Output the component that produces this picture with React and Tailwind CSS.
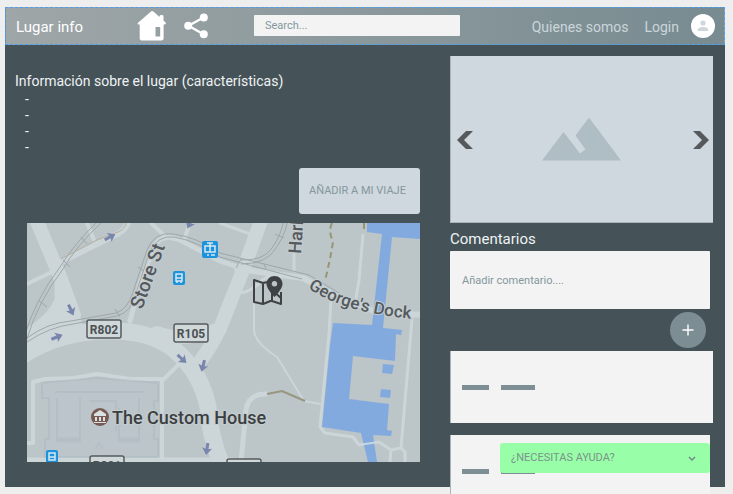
import React from "react";

function HomeIcon() {
  return (
    <svg viewBox="0 0 30 30" className="h-[30px] w-[30px]" aria-hidden="true">
      <path
        fill="#fff"
        fillRule="evenodd"
        d="M14 .6 Q15 -.4 16.4 .6 L22.5 6 V5 Q22.600 4 24.500 3.900 Q26.500 4 26.500 5 V9.500 L29 12 Q29.400 13.600 26.600 13.600 V27.500 Q26.500 29.300 24.500 29.500 H4.800 Q2.800 29.300 2.700 27.500 V13.600 Q0 13.600 .8 12 Z M18.500 16 V25.500 H23.200 V16 Z"
      />
    </svg>
  );
}

function ShareIcon() {
  return (
    <svg viewBox="0 0 24 26" className="h-[26px] w-6" aria-hidden="true">
      <path d="M19.500 4.500 L4.500 12.800 L19.500 21.200" fill="none" stroke="#fff" strokeWidth="2.400" />
      <g fill="#fff">
        <circle cx="19.800" cy="4.500" r="4" />
        <circle cx="4.200" cy="12.800" r="4" />
        <circle cx="19.800" cy="21.200" r="4" />
      </g>
    </svg>
  );
}

function Header() {
  return (
    <header className="flex h-[38px] items-center border border-dashed border-[#4a9ff0] bg-linear-to-r from-[#9fa6a8] to-[#778b90] pr-[9px] pb-px pl-[10px]">
      <h1 className="w-[121px] pt-[3px] text-[15px] text-white">Lugar info</h1>
      <a href="#inicio" aria-label="Inicio"><HomeIcon /></a>
      <a href="#compartir" aria-label="Compartir" className="ml-[17px]"><ShareIcon /></a>
      <input
        type="search"
        aria-label="Buscar"
        placeholder="Search..."
        className="ml-[46px] h-[21px] w-[206px] rounded-[1px] bg-[#f3f3f3] px-[11px] text-[11px] outline-none placeholder:text-[#84979d]"
      />
      <nav className="ml-auto flex items-center text-[14px] text-[#cbd6db]">
        <a href="#quienes" className="pt-[3px]">Quienes somos</a>
        <a href="#login" className="ml-4 pt-[3px]">Login</a>
        <a href="#perfil" aria-label="Perfil" className="ml-3 flex h-6 w-6 items-center justify-center rounded-full bg-white">
          <svg viewBox="0 0 12 12" className="h-3 w-3" fill="#cdd7dc" aria-hidden="true">
            <circle cx="6" cy="3" r="2.600" />
            <path d="M.8 11 V9.500 Q1 7.200 6 7 Q11 7.200 11.200 9.500 V11 Z" />
          </svg>
        </a>
      </nav>
    </header>
  );
}

const ARROWS = [
  [83, 14, -28],
  [44, 87, 65],
  [30, 114, -22],
  [155, 136, 42],
  [176, 143, 105],
  [180, 226, 98],
  [163, 0, 115],
];

const SHIELDS = [
  [60, 96, "R802"],
  [147, 100, "R105"],
  [63, 232, "R801"],
  [200, 235, "R801"],
];

function StreetMap() {
  return (
    <svg
      viewBox="0 0 393 239"
      preserveAspectRatio="xMidYMid slice"
      role="img"
      aria-label="Mapa"
      className="ml-3 block h-[239px] w-auto bg-[#bcc5c8]"
      fontFamily="Roboto, sans-serif"
    >
      {/* streets */}
      <g fill="none" stroke="#ccd5d8" strokeLinejoin="round" strokeLinecap="round">
        <path d="M9 -4 L32 51 L47 92" strokeWidth="14" />
        <path d="M28 52 V76 Q22 92 -4 108 L-2 122 L55 101 L48 80 Z" fill="#ccd5d8" strokeWidth="1" />
        <path d="M-4 132 Q35 107 85 108 Q125 108 149 128 Q174 150 181 184 Q183 215 196 245" strokeWidth="17" />
        <path d="M235 -5 L218 42 L199 90 Q190 116 174 137" strokeWidth="14" />
        <path d="M193 106 Q155 120 130 110" strokeWidth="14" />
        <path d="M34 39 L86 13 Q97 9 101 0" strokeWidth="6" />
        <path d="M0 61 L31 46 M60 0 L67 17 M124 0 L138 13 M163 0 L157 17" strokeWidth="4" />
        <path d="M103 98 L113 61 L128 22 Q136 9 155 18 L193 38 L214 45" strokeWidth="5" />
        <path d="M193 0 L226 12 M267 28 V48 M213 70 Q226 68 235 57 Q247 50 267 53" strokeWidth="3" />
        <path d="M210 46 L276 55 L315 76 L350 89 L397 92" strokeWidth="6" />
        <path d="M336 12 L332 57 L329 75 M304 77 L302 111 L293 204 L298 210 L326 214 L332 222 L352 219 L364 227 L374 225 L378 229 V240 M364 227 L363 239 M374 225 L385 96" strokeWidth="3" />
        <path d="M227 75 V108 Q229 121 250 134 L277 178 L293 181" strokeWidth="2" />
        <path d="M214 239 L219 187 Q221 171 239 171" strokeWidth="5" />
        <path d="M6 220 V159 L18 156 L47 155 L70 151 L103 156 H137 L157 136 M135 156 V239 M0 220 H6" strokeWidth="4" />
        <path d="M-2 239 H205" strokeWidth="9" />
      </g>
      {/* custom house block */}
      <g fill="none" stroke="#aab6c2" strokeWidth="2" opacity=".4">
        <path d="M15 160 L70 155 L131 160 V178 H127 V216 H131 V234 H18 V216 H22 V175 H15 Z" fill="#bdc8ce" />
        <path d="M30 175 V218 H53 V175 M92 185 V218 H112 V175 M62 178 H89 V208 M28 169 H118" />
        <path d="M30 217 H53 M92 217 H112" strokeWidth="5" />
        <path d="M68 226 L72 220 L76 226" />
      </g>
      {/* docks */}
      <path
        fill="#83aade"
        d="M340 0 H393 V16 L365 14 L356 105 L375 107 L374 112 L369 111 L368 138 L326 133 L322 176 L362 181 L360 207 L365 208 L364 213 L346 212 L350 239 H341 L334 210 L295 204 L303 122 L306 100 L345 102 L355 11 L340 9 Z M356 141 L367 142 L365 151 L355 150 Z M354 166 L364 167 L363 175 L353 174 Z"
      />
      <path d="M331 222 L352 219" stroke="#c7d5e2" strokeWidth="2" />
      {/* tram lines and footpaths */}
      <g fill="none" stroke="#9ea7aa" strokeWidth="1">
        <path d="M0 116 Q10 80 36 46 Q50 22 74 0 M-2 112 Q8 77 33 44 Q48 20 69 0" />
        <path d="M0 115 Q20 100 44 98 L89 90 Q101 86 106 69 L120 27 Q128 8 146 11 Q170 14 193 30 L225 38 L282 52 L312 70" />
        <path d="M0 119 Q22 104 46 101 L90 93 Q105 89 109 70 L123 28 Q131 12 147 14 Q170 18 193 34 L222 42 L275 56" />
        <path d="M213 37 Q237 38 245 25 Q254 12 256 0 M214 41 Q240 41 249 25 Q258 12 260 0" />
        <path d="M54 14 L60 21 M36 37 L43 44 M12 78 L20 84 M88 86 L93 94 M111 44 L117 48 M209 45 L214 36 M248 11 L257 15 M237 41 L239 46" />
      </g>
      <path d="M34 36 L70 17 L91 9 Q98 6 99 0" fill="none" stroke="#b5b09c" />
      <path d="M240 171 L255 168 L278 178" fill="none" stroke="#989680" strokeWidth="2" />
      <path d="M305 0 Q301 8 306 19 L303 36 L298 58 M337 0 V10" fill="none" stroke="#989573" strokeWidth="2" strokeDasharray="6 4" />
      {/* one-way arrows */}
      {ARROWS.map(([x, y, angle]) => (
        <path
          key={`${x}-${y}`}
          d="M-6 -1.500 H0 L-1 -5 L6 0 L-1 5 L0 1.500 H-6 Z"
          fill="#7885ad"
          transform={`translate(${x} ${y}) rotate(${angle})`}
        />
      ))}
      {/* transit stops */}
      <g fill="#1d93dc">
        <rect x="175" y="18" width="16" height="17" rx="2" />
        <rect x="146" y="48" width="12" height="14" rx="2" />
        <rect x="19" y="227" width="12" height="14" rx="2" />
      </g>
      <g fill="none" stroke="#d8e8f2" strokeWidth="1.500">
        <path d="M180 20 H186 M183 20 V23 M178 23 H188 V29 H178 Z M183 23 V29 M180 32 H182 M184 32 H188" />
        <path d="M149 51 H155 V58 H149 Z M149 55 H155 M150 58 V60 M154 58 V60" />
        <path d="M22 230 H28 V237 H22 Z M22 234 H28" />
      </g>
      {/* road shields */}
      {SHIELDS.map(([x, y, name]) => (
        <g key={`${x}-${name}`}>
          <rect x={x} y={y + 1} width="34" height="18" rx="2" fill="#d0d8da" stroke="#555b5e" strokeWidth="1.500" />
          <text x={x + 17} y={y + 15} textAnchor="middle" fontSize="12" fontWeight="700" fill="#4b5053">{name}</text>
        </g>
      ))}
      {/* place names */}
      <g fill="#54595c" stroke="#c5cdd0" strokeWidth="2" paintOrder="stroke" fontSize="18" fontWeight="500">
        <text transform="translate(115 87) rotate(-70)" fontSize="19">Store St</text>
        <text transform="translate(274 31) rotate(-86)">Harbour</text>
        <path id="georges-dock" d="M281 65 Q316 90 388 96" fill="none" stroke="none" />
        <text fontSize="17"><textPath href="#georges-dock">George's Dock</textPath></text>
        <text x="85" y="201" fill="#3b3f41">The Custom House</text>
      </g>
      <circle cx="73" cy="194" r="9" fill="#775b53" />
      <path d="M67 191 L73 187 L79 191 V193 H67 Z M68 194 H70 V198 H68 Z M72 194 H74 V198 H72 Z M76 194 H78 V198 H76 Z M67 199 H79 V200 H67 Z" fill="#dce2e3" />
      {/* current place */}
      <g>
        <path
          d="M227 57 L236 60 V81 L227 79 Z M236 81 L246 77 M245 66 V78 L254 81 V69 M245 67 L254 75 M254 75 V81 M236 60 L241 59"
          fill="none"
          stroke="#3f4244"
          strokeWidth="2"
          strokeLinejoin="round"
        />
        <path
          fillRule="evenodd"
          fill="#3f4244"
          d="M247.500 53 C243 53 239.500 56.500 239.500 61 C239.500 66 247.500 74 247.500 74 C247.500 74 255.500 66 255.500 61 C255.500 56.500 252 53 247.500 53 Z M247.500 58 A2.800 2.800 0 1 1 247.400 58 Z"
        />
      </g>
    </svg>
  );
}

function PlaceInfo() {
  return (
    <section className="min-w-0 flex-1 pt-[26px]">
      <h2 className="text-[14px] leading-5 text-[#eef2f4]">Información sobre el lugar (características)</h2>
      <ul className="pl-[10px] text-[14px] leading-4 text-[#eef2f4]">
        <li>-</li>
        <li>-</li>
        <li>-</li>
        <li>-</li>
      </ul>
      <div className="flex justify-end pt-[13px] pb-[9px]">
        <button type="button" className="h-[46px] w-[121px] rounded-[3px] bg-[#cfd8de] pr-1 text-[11px] text-[#84979d]">
          AÑADIR A MI VIAJE
        </button>
      </div>
      <StreetMap />
    </section>
  );
}

function Chevron({ flip }) {
  return (
    <svg viewBox="0 0 16 22" className="h-[22px] w-4" aria-hidden="true">
      <path d={flip ? "M0 3 H7 L16 12 L7 21 H0 L9 12 Z" : "M16 3 H9 L0 12 L9 21 H16 L7 12 Z"} fill="#55595c" />
    </svg>
  );
}

function Gallery() {
  return (
    <div className="flex h-[167px] items-center justify-between border-b border-l border-[#a9b4ba] bg-[#cfd8de] pr-1 pl-[6px]">
      <button type="button" aria-label="Anterior"><Chevron /></button>
      <svg viewBox="0 0 79 44" className="mr-[3px] h-11 w-[79px]" fill="#afbdc4" aria-hidden="true">
        <path d="M0 43.500 L21.500 15 L38 36.500 L43.500 32.500 L33.500 18.500 L47 .5 L79 43.500 Z" />
      </svg>
      <button type="button" aria-label="Siguiente"><Chevron flip /></button>
    </div>
  );
}

function Comment({ className }) {
  return (
    <article className={`flex gap-3 border-l border-[#a9b4ba] bg-[#f3f3f3] pt-[34px] pl-[11px] ${className}`}>
      <span className="h-[5px] w-[27px] bg-[#7d8f95]" />
      <span className="h-[5px] w-[34px] bg-[#7d8f95]" />
    </article>
  );
}

function Sidebar() {
  return (
    <aside className="w-[263px] shrink-0 pt-[11px]">
      <Gallery />
      <h2 className="pt-1 text-[15px] leading-6 text-[#eef2f4]">
        <label htmlFor="comentario">Comentarios</label>
      </h2>
      <div className="pr-[3px]">
        <textarea
          id="comentario"
          placeholder="Añadir comentario...."
          className="block h-[58px] w-full resize-none rounded-[1px] bg-[#f3f3f3] px-3 pt-[22px] text-[11px] leading-4 outline-none placeholder:text-[#84979d]"
        />
      </div>
      <div className="flex justify-end py-[3px] pr-[7px]">
        <button type="button" aria-label="Publicar comentario" className="flex h-9 w-9 items-center justify-center rounded-full bg-[#7c8e94]">
          <svg viewBox="0 0 12 12" className="h-3 w-3" aria-hidden="true">
            <path d="M6 .5 V11.500 M.5 6 H11.500" stroke="#fff" strokeWidth="1.400" />
          </svg>
        </button>
      </div>
      <Comment className="h-[72px]" />
      <Comment className="mt-3 mr-[3px] -mb-[7px] h-[59px]" />
    </aside>
  );
}

function HelpMenu() {
  return (
    <div className="absolute right-[15px] bottom-[14px] w-[210px]">
      <select
        aria-label="Ayuda"
        className="block h-[30px] w-full appearance-none rounded-[3px] bg-[#98ffa8] pr-8 pl-[11px] text-[11px] text-[#7b938b] outline-none"
      >
        <option>¿NECESITAS AYUDA?</option>
      </select>
      <svg viewBox="0 0 8 6" className="pointer-events-none absolute top-[13px] right-[14px] h-[6px] w-2" aria-hidden="true">
        <path d="M1 1 L4 4 L7 1" fill="none" stroke="#6f8c80" strokeWidth="1.500" />
      </svg>
    </div>
  );
}

export default function App() {
  return (
    <div className="min-h-screen bg-[#eeeeee] pt-[7px] pr-2 pb-[7px] pl-[5px] font-['Roboto',sans-serif]">
      <div className="relative bg-[#455257]">
        <Header />
        <main className="flex gap-[30px] pr-3 pl-[10px]">
          <div className="flex min-w-0 flex-1 pb-[25px]">
            <PlaceInfo />
          </div>
          <Sidebar />
        </main>
        <HelpMenu />
      </div>
    </div>
  );
}
